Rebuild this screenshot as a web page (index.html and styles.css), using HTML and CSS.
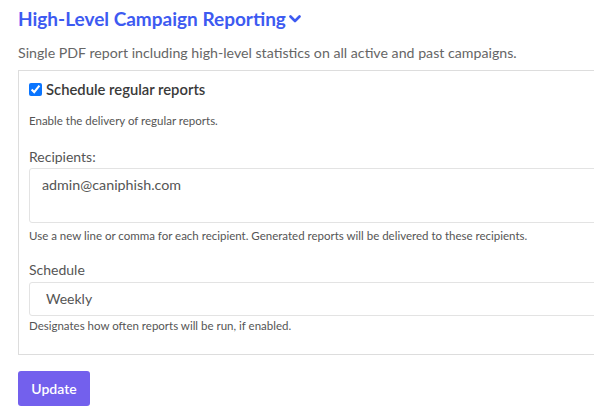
FILE: index.html
```html
<!DOCTYPE html>
<html>
<head>
    <meta charset="utf-8">
    <title>Reporting</title>
<link rel="stylesheet" href="styles.css">
</head>
<body>
    <div class="page">
        <h3 class="report-title">High-Level Campaign Reporting
            <svg class="chevron" width="12" height="10" viewBox="0 0 12 10"><path d="M1.5 2.5 L6 7 L10.5 2.5" fill="none" stroke="#3d5af1" stroke-width="2.6" stroke-linecap="round" stroke-linejoin="round"/></svg>
        </h3>
        <p class="report-desc">Single PDF report including high-level statistics on all active and past campaigns.</p>
        <form class="report-box">
            <label class="check-row"><input type="checkbox" checked> Schedule regular reports</label>
            <small class="hint">Enable the delivery of regular reports.</small>

            <label class="field-label">Recipients:</label>
            <div class="textarea">admin@caniphish.com</div>
            <small class="hint">Use a new line or comma for each recipient. Generated reports will be delivered to these recipients.</small>

            <label class="field-label">Schedule</label>
            <div class="select">Weekly</div>
            <small class="hint">Designates how often reports will be run, if enabled.</small>
        </form>
        <button class="btn-update" type="button">Update</button>
    </div>
</body>
</html>
```

FILE: styles.css
```css
*{
    margin:0;
    padding:0;
    box-sizing:border-box;
}
body{
    font-family:Lato, "Noto Sans", sans-serif;
    color:#555;
    background:#fff;
    overflow:hidden;
}
.page{
    padding:8px 0 0 18px;
    width:800px;
}
.report-title{
    font-size:19px;
    font-weight:bold;
    color:#3d5af1;
    line-height:22px;
    display:flex;
    align-items:center;
    gap:3px;
}
.report-desc{
    margin-top:13px;
    font-size:14.2px;
    color:#666;
    line-height:20px;
}
.report-box{
    margin-top:7px;
    width:700px;
    border:1px solid #ddd;
    padding:8px 10px 20px 10px;
    display:flex;
    flex-direction:column;
}
.check-row{
    display:flex;
    align-items:center;
    gap:4px;
    font-size:14.8px;
    font-weight:600;
    color:#3a3a3a;
    height:20px;
}
.check-row input{
    width:13px;
    height:13px;
    margin:0;
    accent-color:#0a75ff;
}
.hint{
    font-size:11.5px;
    color:#555;
    line-height:16px;
}
.check-row + .hint{
    margin-top:14px;
}
.field-label{
    margin-top:18px;
    font-size:14px;
    color:#555;
    line-height:20px;
}
.textarea{
    margin-top:1px;
    height:55px;
    border:1px solid #e3e3e3;
    border-radius:3px;
    padding:7px 12px;
    font-size:14.3px;
    color:#555;
    margin-bottom:5px;
}
.textarea + .hint + .field-label{
    margin-top:16px;
}
.select{
    margin-top:2px;
    height:34px;
    border:1px solid #e3e3e3;
    border-radius:3px;
    padding:0 16px;
    font-size:14px;
    color:#555;
    line-height:32px;
    margin-bottom:2px;
}
.btn-update{
    margin-top:16px;
    width:72px;
    height:35px;
    border:none;
    border-radius:3px;
    background:#7360ed;
    color:#fff;
    font-family:inherit;
    font-size:14px;
    font-weight:600;
}
```
